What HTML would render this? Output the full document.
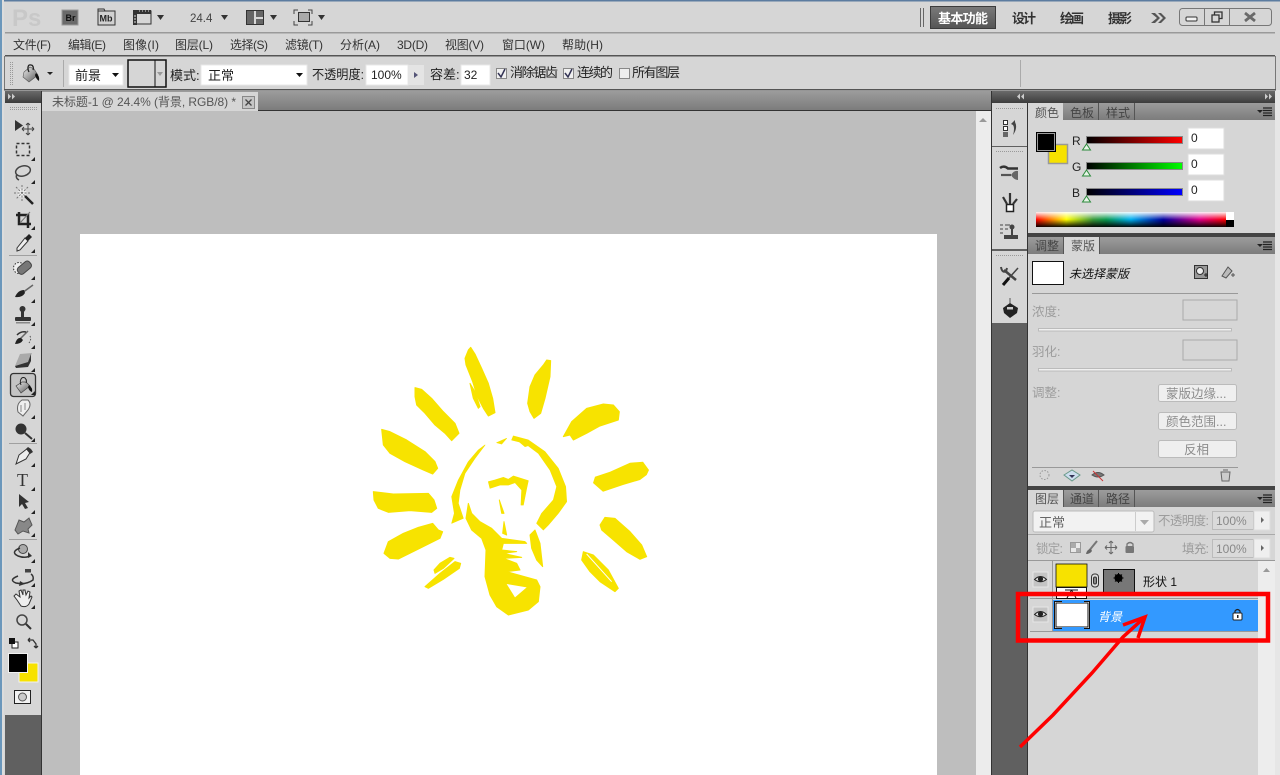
<!DOCTYPE html>
<html><head><meta charset="utf-8"><title>Photoshop</title>
<style>
html,body{margin:0;padding:0;background:#d6d6d6;overflow:hidden}
svg{display:block}
text{font-family:"Liberation Sans","Noto Sans CJK SC",sans-serif;font-size:12px;fill:#333;white-space:pre}
.o{font-size:13px;fill:#222}
.t{fill:#444;font-size:12px}
.ta{fill:#666;font-size:12px}
.w{font-weight:bold;font-size:13px;fill:#333}
.d{fill:#8c8c8c;font-size:12.5px}
.e{fill:#9c9c9c;font-size:12.5px}
</style></head><body>
<svg width="1280" height="775" viewBox="0 0 1280 775" xmlns="http://www.w3.org/2000/svg">
<defs>
<linearGradient id="hd" x1="0" y1="0" x2="0" y2="1"><stop offset="0" stop-color="#6a6a6a"/><stop offset="1" stop-color="#3c3c3c"/></linearGradient>
<linearGradient id="tb" x1="0" y1="0" x2="0" y2="1"><stop offset="0" stop-color="#9c9c9c"/><stop offset="1" stop-color="#7c7c7c"/></linearGradient>
<linearGradient id="wk" x1="0" y1="0" x2="0" y2="1"><stop offset="0" stop-color="#7a7a7a"/><stop offset="1" stop-color="#555"/></linearGradient>
<linearGradient id="sr" x1="0" y1="0" x2="1" y2="0"><stop offset="0" stop-color="#000"/><stop offset="1" stop-color="#f00"/></linearGradient>
<linearGradient id="sg" x1="0" y1="0" x2="1" y2="0"><stop offset="0" stop-color="#000"/><stop offset="1" stop-color="#0f0"/></linearGradient>
<linearGradient id="sb" x1="0" y1="0" x2="1" y2="0"><stop offset="0" stop-color="#000"/><stop offset="1" stop-color="#00f"/></linearGradient>
<linearGradient id="sp" x1="0" y1="0" x2="1" y2="0"><stop offset="0" stop-color="#f00"/><stop offset=".16" stop-color="#ff0"/><stop offset=".3" stop-color="#3a9a3a"/><stop offset=".37" stop-color="#0a9a50"/><stop offset=".5" stop-color="#00b0f0"/><stop offset=".67" stop-color="#0000a0"/><stop offset=".86" stop-color="#e0008a"/><stop offset="1" stop-color="#f00"/></linearGradient>
<linearGradient id="spv" x1="0" y1="0" x2="0" y2="1"><stop offset="0" stop-color="#fff" stop-opacity=".95"/><stop offset=".5" stop-color="#fff" stop-opacity="0"/><stop offset=".5" stop-color="#000" stop-opacity="0"/><stop offset="1" stop-color="#000" stop-opacity=".95"/></linearGradient>
<linearGradient id="bk" x1="0" y1="0" x2="1" y2="1"><stop offset="0" stop-color="#eee"/><stop offset="1" stop-color="#555"/></linearGradient>
<g id="eye"><rect x="0" y="0" width="15" height="15" fill="#c4c4c4" stroke="#e6e6e6"/><path d="M1.5 7.5Q7.5 1.5 13.5 7.5Q7.5 12 1.5 7.5Z" fill="#ddd" stroke="#222"/><circle cx="7.5" cy="7" r="2.6" fill="#222"/></g>
<path id="tri" d="M0 4H4V0Z" fill="#222"/>
<g id="menuic"><path d="M0 2H6L3 5Z" fill="#222"/><path d="M6 0H15M6 2.5H15M6 5H15M6 7.5H15" stroke="#222" stroke-width="1.2" fill="none"/></g>
</defs>

<!-- frame -->
<rect width="1280" height="775" fill="#d6d6d6"/>
<rect width="1280" height="1.5" fill="#5c7ca0"/>
<rect x="0" y="0" width="2" height="775" fill="#6b97bb"/>
<rect x="2" y="0" width="2" height="775" fill="#dcdcdc"/>
<rect x="1275" y="90" width="5" height="685" fill="#e6e6e6"/>

<!-- title bar -->
<text x="12" y="26" style="font-size:24px;font-weight:bold;fill:#c8c8c8">Ps</text>
<rect x="62" y="10" width="16" height="15" fill="#6a6a6a" stroke="#999"/><text x="65.500" y="21" style="font-size:9px;font-weight:bold;fill:#111">Br</text>
<rect x="98" y="11" width="17" height="14" fill="#d0d0d0" stroke="#333"/><path d="M98 11V9H104L105 11" fill="none" stroke="#333"/><text x="99.500" y="21.500" style="font-size:9px;font-weight:bold;fill:#222">Mb</text>
<rect x="134" y="11" width="17" height="13" fill="#d6d6d6" stroke="#333"/><rect x="133" y="10" width="18" height="4" fill="#333"/><rect x="133" y="10" width="4" height="15" fill="#333"/><path d="M134 16h2M134 19h2M134 22h2M139 11h1M142 11h1M145 11h1M148 11h1" stroke="#ddd"/>
<path d="M157 15H164L160.500 20Z" fill="#333"/>
<text x="190" y="22" style="font-size:11.500px;fill:#444">24.4</text>
<path d="M221 15H228L224.500 20Z" fill="#333"/>
<rect x="246.500" y="10.500" width="17" height="14" fill="#d8d8d8" stroke="#333"/><rect x="247" y="11" width="7" height="13" fill="#666"/><rect x="256" y="11" width="7" height="6" fill="#666"/><rect x="256" y="19" width="7" height="5" fill="#666"/>
<path d="M270 15H277L273.500 20Z" fill="#333"/>
<rect x="298.500" y="12.500" width="11" height="9" fill="#aaa" stroke="#333"/><path d="M294 14V10H298M308 10H312V14M312 21V25H308M298 25H294V21" fill="none" stroke="#444"/>
<path d="M318 15H325L321.500 20Z" fill="#333"/>
<rect x="920" y="8" width="1" height="19" fill="#666"/><rect x="923" y="8" width="1" height="19" fill="#666"/>
<rect x="930.500" y="6.500" width="65" height="22" fill="url(#wk)" stroke="#3c3c3c"/>
<text x="938" y="23" class="w" style="fill:#fff" textLength="50">基本功能</text>
<text x="1012" y="23" class="w" textLength="24">设计</text>
<text x="1060" y="23" class="w" textLength="24">绘画</text>
<text x="1108" y="23" class="w" textLength="24">摄影</text>
<path d="M1151 13L1157 18L1151 23H1155L1160 18L1155 13ZM1158 13L1163 18L1158 23H1161L1166 18L1161 13Z" fill="#555"/>
<rect x="1179.500" y="8.500" width="92" height="17" rx="3" fill="#d6d6d6" stroke="#777"/>
<path d="M1204.500 9V25M1229.500 9V25" stroke="#777"/>
<rect x="1186" y="17" width="11" height="4" rx="1" fill="#f2f2f2" stroke="#333"/>
<rect x="1212" y="15" width="7" height="7" fill="none" stroke="#333" stroke-width="1.300"/><path d="M1214.500 15V12H1222V18.500H1219" fill="none" stroke="#333" stroke-width="1.300"/>
<path d="M1245 13L1255 21M1255 13L1245 21" stroke="#6a6a6a" stroke-width="2.800"/>
<rect x="5" y="32" width="1270" height="1.500" fill="#9a9a9a"/>

<!-- menu -->
<text x="13" y="49" textLength="38">文件(F)</text>
<text x="68" y="49" textLength="38">编辑(E)</text>
<text x="123" y="49" textLength="36">图像(I)</text>
<text x="175" y="49" textLength="38">图层(L)</text>
<text x="230" y="49" textLength="38">选择(S)</text>
<text x="285" y="49" textLength="38">滤镜(T)</text>
<text x="340" y="49" textLength="40">分析(A)</text>
<text x="397" y="49" textLength="31">3D(D)</text>
<text x="445" y="49" textLength="39">视图(V)</text>
<text x="502" y="49" textLength="43">窗口(W)</text>
<text x="562" y="49" textLength="41">帮助(H)</text>
<rect x="5" y="55" width="1270" height="1.500" fill="#555"/>

<!-- options bar -->
<rect x="4" y="56" width="1" height="34" fill="#777"/>
<rect x="1275" y="56" width="1" height="34" fill="#777"/>
<path d="M10.500 62V85" stroke="#999" stroke-dasharray="1 1" stroke-width="1"/><path d="M12.500 62V85" stroke="#999" stroke-dasharray="1 1" stroke-width="1"/>
<path d="M30 67L24 72L23 77L29 82L38 75L34 69Z" fill="url(#bk)" stroke="#555" stroke-width=".6"/><path d="M29 72C27 68 28 64 31 65C33 65 34 68 33 70" fill="none" stroke="#222" stroke-width="1.300"/><path d="M36 73Q40 76 39 81Q36 79 35 75Z" fill="#111"/>
<path d="M47 72H53L50 75Z" fill="#222"/>
<rect x="63" y="60" width="1" height="27" fill="#aaa"/>
<rect x="69" y="65" width="54" height="20" fill="#fff" stroke="#e8e8e8"/>
<text x="75" y="80" class="o">前景</text>
<path d="M112 73H119L115.500 77Z" fill="#111"/>
<rect x="128" y="60" width="38" height="27" fill="#d6d6d6" stroke="#111" stroke-width="1.500"/>
<rect x="154.500" y="60" width="1" height="27" fill="#111"/>
<path d="M157 72H163L160 76Z" fill="#999"/>
<text x="170" y="80" class="o">模式:</text>
<rect x="201" y="65" width="106" height="20" fill="#fff" stroke="#e8e8e8"/>
<text x="208" y="80" class="o">正常</text>
<path d="M296 73H303L299.500 77Z" fill="#111"/>
<text x="312" y="79" class="o" textLength="52" lengthAdjust="spacingAndGlyphs">不透明度:</text>
<rect x="366" y="65" width="42" height="20" fill="#fff" stroke="#e8e8e8"/>
<text x="371" y="79" style="font-size:12px;fill:#222">100%</text>
<rect x="408" y="65" width="16" height="20" fill="#e4e4e4"/><path d="M414 72L418 75L414 78Z" fill="#557"/>
<text x="430" y="79" class="o">容差:</text>
<rect x="461" y="65" width="29" height="20" fill="#fff" stroke="#e8e8e8"/>
<text x="464" y="79" style="font-size:12px;fill:#222">32</text>
<rect x="496.500" y="68.500" width="10" height="10" fill="#f0f0f0" stroke="#888"/><path d="M498 73L501 77L505 69" fill="none" stroke="#335" stroke-width="1.500"/>
<text x="510" y="77" class="o" textLength="48">消除锯齿</text>
<rect x="563.500" y="68.500" width="10" height="10" fill="#f0f0f0" stroke="#888"/><path d="M565 73L568 77L572 69" fill="none" stroke="#335" stroke-width="1.500"/>
<text x="577" y="77" class="o" textLength="36">连续的</text>
<rect x="619.500" y="68.500" width="10" height="10" fill="#eee" stroke="#888"/>
<text x="632" y="77" class="o" textLength="48">所有图层</text>
<rect x="1020" y="60" width="1" height="27" fill="#aaa"/>
<rect x="4" y="89" width="1272" height="1.500" fill="#555"/>

<!-- doc area -->
<rect x="42" y="91" width="950" height="19" fill="url(#tb)"/>
<rect x="42" y="110" width="950" height="1" fill="#333"/>
<rect x="42" y="111" width="934" height="664" fill="#bebebe"/>
<rect x="976" y="111" width="15" height="664" fill="#ececec"/>
<path d="M979 122H987L983 118Z" fill="#999"/>
<rect x="80" y="234" width="857" height="541" fill="#fff"/>
<rect x="42" y="92" width="216" height="19" fill="#d6d6d6"/>
<text x="52" y="106" style="fill:#555;font-size:12px" textLength="184">未标题-1 @ 24.4% (背景, RGB/8) *</text>
<rect x="242.500" y="96.500" width="12" height="12" fill="#c6c6c6" stroke="#888"/><path d="M245.500 99.500L251.500 105.500M251.500 99.500L245.500 105.500" stroke="#444" stroke-width="1.300"/>

<!-- tools panel -->
<rect x="5" y="91" width="36" height="12" fill="url(#hd)"/>
<path d="M8 93.500L11 96.500L8 99.500ZM12 93.500L15 96.500L12 99.500Z" fill="#ccc"/>
<rect x="5" y="103" width="36" height="612" fill="#d6d6d6"/>
<rect x="5" y="715" width="36" height="60" fill="#606060"/>
<rect x="41" y="91" width="1" height="684" fill="#333"/>
<path d="M10 107.500H37" stroke="#999" stroke-dasharray="1 1" stroke-width="1"/><path d="M10 109.500H37" stroke="#999" stroke-dasharray="1 1" stroke-width="1"/>

<!-- move -->
<path d="M15 120L15 131L23 125.500Z" fill="#333"/><path d="M28 123V135M22 129H34M28 123l-2 2M28 123l2 2M28 135l-2-2M28 135l2-2M22 129l2-2M22 129l2 2M34 129l-2-2M34 129l-2 2" stroke="#444" fill="none"/>
<!-- marquee -->
<rect x="16.500" y="143.500" width="13" height="12" fill="none" stroke="#333" stroke-width="1.500" stroke-dasharray="3 2"/>
<use href="#tri" x="31" y="157"/>
<!-- lasso -->
<ellipse cx="23" cy="171" rx="7.500" ry="5" transform="rotate(-15 23 171)" fill="none" stroke="#444" stroke-width="1.500"/><path d="M17 174Q15 178 19 180" fill="none" stroke="#444" stroke-width="1.500"/>
<use href="#tri" x="31" y="180"/>
<!-- wand -->
<circle cx="22" cy="193" r="4.500" fill="#eee"/><path d="M22 185V201M14 193H30M16 187L28 199M28 187L16 199" stroke="#777" stroke-dasharray="2 1.500"/><path d="M25 196L33 204" stroke="#222" stroke-width="2.500"/>
<!-- crop -->
<path d="M19 212V224H31M16 215H28V228" fill="none" stroke="#222" stroke-width="2.500"/><path d="M20 223L30 212" stroke="#777"/>
<use href="#tri" x="31" y="226"/>
<!-- eyedropper -->
<path d="M17 248L25 238L28 241L20 250L17 251Z" fill="#eee" stroke="#333"/><path d="M25 238L29 234L32 237L28 241Z" fill="#222"/>
<use href="#tri" x="31" y="249"/>
<rect x="9" y="255" width="28" height="1" fill="#a0a0a0"/>
<!-- heal -->
<circle cx="19" cy="268" r="5.500" fill="#eee" stroke="#333" stroke-dasharray="1.500 1.500"/><rect x="17" y="264" width="15" height="8" rx="3" transform="rotate(-40 24 268)" fill="#777" stroke="#444"/>
<use href="#tri" x="31" y="276"/>
<!-- brush -->
<path d="M33 285L22 293" stroke="#666" stroke-width="1.500"/><path d="M15 297Q18 290 24 290L25 293Q22 298 15 297Z" fill="#222"/>
<use href="#tri" x="31" y="299"/>
<!-- stamp -->
<circle cx="22.500" cy="309" r="3" fill="#333"/><rect x="21" y="311" width="3" height="6" fill="#333"/><rect x="15" y="317" width="16" height="4" rx="1" fill="#333"/><rect x="16" y="322" width="14" height="1.500" fill="#888"/>
<use href="#tri" x="31" y="322"/>
<!-- history brush -->
<path d="M28 331L20 339" stroke="#666" stroke-width="1.500"/><path d="M15 344Q17 337 21 338L23 340Q21 344 15 344Z" fill="#222"/><path d="M17 335Q21 331 26 332" fill="none" stroke="#333" stroke-width="1.500"/><path d="M30 336Q32 340 28 344" fill="none" stroke="#555" stroke-dasharray="1.500 1.500"/>
<use href="#tri" x="31" y="345"/>
<!-- eraser -->
<path d="M20 354L32 353L28 362L15 366Z" fill="#aaa"/><path d="M15 366L28 362L31 354L31 361L28 367L16 368Z" fill="#333"/>
<use href="#tri" x="31" y="368"/>
<!-- bucket selected -->
<rect x="10.500" y="373.500" width="25" height="23" rx="3" fill="#c4c4c4" stroke="#333" stroke-width="1.300"/>
<path d="M22 382L16 386L21 393L30 386L26 382Z" fill="url(#bk)" stroke="#444" stroke-width=".7"/><path d="M21 385C19 380 22 376 25 378C26 379 27 381 26 383" fill="none" stroke="#222"/><path d="M29 385Q33 388 32 392Q29 391 28 387Z" fill="#111"/>
<use href="#tri" x="31" y="391"/>
<!-- smudge -->
<path d="M18 412Q16 404 22 400L28 400Q32 404 28 410L23 416Z" fill="#eee" stroke="#666"/><path d="M21 405V412M25 403V410" stroke="#888"/>
<use href="#tri" x="31" y="415"/>
<!-- sponge / burn -->
<circle cx="21" cy="429" r="5.500" fill="#333"/><path d="M25 433L32 439" stroke="#333" stroke-width="2"/>
<use href="#tri" x="31" y="438"/>
<rect x="9" y="443" width="28" height="1" fill="#a0a0a0"/>
<!-- pen -->
<path d="M16 464L19 455L28 448L31 451L26 459L16 464Z" fill="#eee" stroke="#333"/><path d="M28 447L31 449L33 452L30 454L26 449Z" fill="#333"/>
<use href="#tri" x="31" y="463"/>
<!-- type -->
<text x="17" y="486" style="font-family:'Liberation Serif',serif;font-size:18px;fill:#333">T</text>
<use href="#tri" x="31" y="487"/>
<!-- path selection -->
<path d="M19 494L19 507L22 504L25 509L28 508L25 503L29 502Z" fill="#333"/>
<use href="#tri" x="31" y="510"/>
<!-- custom shape -->
<path d="M15 530L19 520L24 522L29 518L32 525L28 529L29 533L23 531L18 534Z" fill="#888" stroke="#555"/>
<use href="#tri" x="31" y="533"/>
<rect x="9" y="539" width="28" height="1" fill="#a0a0a0"/>
<!-- 3D rot -->
<circle cx="23" cy="549" r="4.500" fill="#aaa" stroke="#444"/><path d="M20 548Q10 552 18 556Q26 559 31 555" fill="none" stroke="#333" stroke-width="1.500"/><path d="M28 552L32 556L28 558" fill="#333"/>
<use href="#tri" x="31" y="559"/>
<!-- 3D cam -->
<path d="M18 576Q8 580 16 583Q26 585 33 580Q34 576 31 574" fill="none" stroke="#333" stroke-width="1.500"/><path d="M20 581L25 584L19 586Z" fill="#333"/><rect x="25" y="569" width="6" height="3.500" fill="#444"/>
<use href="#tri" x="31" y="583"/>
<!-- hand -->
<path d="M17 600L14 596L16 594L20 597L19 591L21 590L23 595V590L25 590L26 595L28 591L30 592L29 598L31 596L32 597L29 604Q26 608 21 606Z" fill="#eee" stroke="#333"/>
<use href="#tri" x="31" y="605"/>
<!-- zoom -->
<circle cx="22" cy="620" r="5" fill="#d6d6d6" stroke="#444" stroke-width="1.500"/><path d="M26 624L31 629" stroke="#333" stroke-width="2"/>
<!-- small colors -->
<rect x="12" y="642" width="6" height="6" fill="#fff" stroke="#222"/><rect x="9" y="638" width="6" height="6" fill="#111"/>
<path d="M28 640H33L36 644V648M28 640l2-2M28 640l2 2M36 648l-2-2M36 648l2-2" fill="none" stroke="#333" stroke-width="1.300"/>
<!-- fg/bg -->
<rect x="19" y="663" width="19" height="19" fill="#f7e200" stroke="#f2f2f2"/>
<rect x="8.500" y="653.500" width="19" height="19" fill="#000" stroke="#f2f2f2"/>
<rect x="14.500" y="690.500" width="16" height="13" fill="#f2f2f2" stroke="#222"/><circle cx="22.500" cy="697" r="4" fill="#ccc" stroke="#555"/>

<!-- dock -->
<rect x="992" y="91" width="283" height="12" fill="url(#hd)"/>
<path d="M1020 93.500L1017 96.500L1020 99.500ZM1024 93.500L1021 96.500L1024 99.500ZM1265 93.500L1268 96.500L1265 99.500ZM1269 93.500L1272 96.500L1269 99.500Z" fill="#ccc"/>
<rect x="992" y="103" width="36" height="672" fill="#606060"/>
<rect x="991" y="91" width="1" height="684" fill="#333"/>
<rect x="992" y="103" width="35" height="43" fill="#d6d6d6"/>
<rect x="992" y="147" width="35" height="102" fill="#d6d6d6"/>
<rect x="992" y="251" width="35" height="72" fill="#d6d6d6"/>
<path d="M996 108.500H1023M996 151.500H1023M996 255.500H1023" stroke="#999" stroke-dasharray="1 1"/>
<!-- history -->
<rect x="1003.500" y="120.500" width="4" height="4" fill="#fff" stroke="#333"/><rect x="1003.500" y="126.500" width="4" height="4" fill="#fff" stroke="#333"/><rect x="1003" y="132" width="5" height="5" fill="#666"/>
<path d="M1011 124L1015 120V122Q1018 128 1013 135Q1015 128 1013 125Z" fill="#444"/>
<!-- brush presets -->
<path d="M1000 168Q1004 165 1008 168.500L1018 168.500" stroke="#333" stroke-width="2.500" fill="none"/><path d="M1001 175H1011" stroke="#555" stroke-width="2.200"/><path d="M1011 175Q1014 170 1018 171V180Q1014 180 1011 175Z" fill="#666"/>
<!-- brushes cup -->
<rect x="1006.500" y="204.500" width="7" height="7" fill="#fff" stroke="#222" stroke-width="1.500"/><path d="M1007 204L1003 197M1010 204V193M1013 204L1017 199" stroke="#333" stroke-width="2.200"/>
<!-- clone -->
<path d="M1000 225H1003M1000 229H1003M1000 233H1003M1005 225H1010M1005 229H1008" stroke="#444"/><circle cx="1012" cy="227" r="2.500" fill="#444"/><rect x="1011" y="229" width="2" height="6" fill="#444"/><rect x="1004" y="235" width="14" height="4" fill="#444"/>
<!-- tools -->
<path d="M1004 270L1016 280" stroke="#444" stroke-width="2.500"/><path d="M1001 267Q1002 273 1006 271.500L1007 268" fill="none" stroke="#444" stroke-width="2"/><path d="M1018 268L1009 278" stroke="#444" stroke-width="1.500"/><path d="M1009 278L1003 285" stroke="#111" stroke-width="3"/>
<!-- 3d -->
<path d="M1010 298V304" stroke="#555"/><path d="M1003 308L1010 303L1018 308L1017 313L1010 318L1004 313Z" fill="#222"/><path d="M1007 307H1013V309.500H1007Z" fill="#ccc"/>

<!-- color panel -->
<rect x="1027" y="103" width="1" height="672" fill="#333"/>
<rect x="1028" y="103" width="247" height="17" fill="url(#tb)"/>
<rect x="1028" y="103" width="35" height="17" fill="#d6d6d6"/>
<path d="M1098.500 103V120M1134.500 103V120" stroke="#555"/>
<text x="1035" y="117" class="ta" style="fill:#555">颜色</text>
<text x="1070" y="117" class="t">色板</text>
<text x="1106" y="117" class="t">样式</text>
<use href="#menuic" x="1257" y="108"/>
<rect x="1048.500" y="144.500" width="19" height="19" fill="#f7e200" stroke="#999" stroke-width="1.500"/>
<rect x="1036.500" y="132.500" width="19" height="19" fill="#000" stroke="#000"/><rect x="1037.500" y="133.500" width="17" height="17" fill="#000" stroke="#ddd" stroke-width=".7"/>
<text x="1072" y="145" style="font-size:12px;fill:#222">R</text>
<text x="1072" y="171" style="font-size:12px;fill:#222">G</text>
<text x="1072" y="197" style="font-size:12px;fill:#222">B</text>
<rect x="1086.500" y="136.500" width="96" height="7" fill="url(#sr)" stroke="#888"/>
<rect x="1086.500" y="162.500" width="96" height="7" fill="url(#sg)" stroke="#888"/>
<rect x="1086.500" y="188.500" width="96" height="7" fill="url(#sb)" stroke="#888"/>
<path d="M1082.500 150L1086.500 144L1090.500 150Z" fill="#e6f4e6" stroke="#2a8a3a"/>
<path d="M1082.500 176L1086.500 170L1090.500 176Z" fill="#e6f4e6" stroke="#2a8a3a"/>
<path d="M1082.500 202L1086.500 196L1090.500 202Z" fill="#e6f4e6" stroke="#2a8a3a"/>
<rect x="1188" y="128" width="36" height="21" fill="#fff" stroke="#ddd"/><text x="1191" y="142" style="fill:#222;font-size:12px">0</text>
<rect x="1188" y="154" width="36" height="21" fill="#fff" stroke="#ddd"/><text x="1191" y="168" style="fill:#222;font-size:12px">0</text>
<rect x="1188" y="180" width="36" height="21" fill="#fff" stroke="#ddd"/><text x="1191" y="194" style="fill:#222;font-size:12px">0</text>
<rect x="1036" y="212" width="190" height="15" fill="url(#sp)"/>
<rect x="1036" y="212" width="190" height="15" fill="url(#spv)"/>
<rect x="1226" y="212" width="8" height="8" fill="#fff"/><rect x="1226" y="220" width="8" height="7" fill="#000"/>
<rect x="1028" y="233" width="247" height="4" fill="#444"/>

<!-- masks panel -->
<rect x="1028" y="237" width="247" height="17" fill="url(#tb)"/>
<rect x="1064" y="237" width="35" height="17" fill="#d6d6d6"/>
<path d="M1063.500 237V254M1099.500 237V254" stroke="#555"/>
<text x="1035" y="250" class="t">调整</text>
<text x="1071" y="250" class="ta" style="fill:#555">蒙版</text>
<use href="#menuic" x="1257" y="242"/>
<rect x="1032.500" y="261.500" width="31" height="23" fill="#fff" stroke="#111"/>
<text x="1069" y="278" style="font-style:italic;fill:#111;font-size:12px">未选择蒙版</text>
<rect x="1194.500" y="265.500" width="13" height="13" fill="#999" stroke="#333"/><circle cx="1200" cy="271" r="3.500" fill="#eee" stroke="#333"/><path d="M1204 275H1208M1206 273V277" stroke="#222"/>
<path d="M1222 276L1228 267L1232 271L1226 278ZM1231 275H1235M1233 273V277" fill="#bbb" stroke="#555"/>
<rect x="1032" y="293" width="206" height="1" fill="#999"/>
<text x="1032" y="316" class="e">浓度:</text>
<rect x="1183" y="300" width="54" height="20" fill="#d6d6d6" stroke="#aaa"/>
<rect x="1038.500" y="328.500" width="193" height="2.500" fill="#f0f0f0" stroke="#bbb"/>
<text x="1032" y="356" class="e">羽化:</text>
<rect x="1183" y="340" width="54" height="20" fill="#d6d6d6" stroke="#aaa"/>
<rect x="1038.500" y="368.500" width="193" height="2.500" fill="#f0f0f0" stroke="#bbb"/>
<text x="1032" y="397" class="e">调整:</text>
<rect x="1158.500" y="384.500" width="78" height="17" rx="2" fill="#efefef" stroke="#bbb"/><text x="1166" y="398" class="d">蒙版边缘...</text>
<rect x="1158.500" y="412.500" width="78" height="17" rx="2" fill="#efefef" stroke="#bbb"/><text x="1166" y="426" class="d">颜色范围...</text>
<rect x="1158.500" y="440.500" width="78" height="17" rx="2" fill="#efefef" stroke="#bbb"/><text x="1184" y="454" class="d">反相</text>
<rect x="1032" y="467" width="206" height="1" fill="#999"/>
<circle cx="1044.500" cy="475" r="4.500" fill="none" stroke="#999" stroke-dasharray="1.500 1.500"/>
<path d="M1064 475L1072 470L1080 475L1072 481Z" fill="#cde" stroke="#6a9a8a"/><path d="M1069 475H1075L1072 478Z" fill="#335"/>
<path d="M1092 475Q1098 470 1104 475Q1098 479 1092 475Z" fill="#777" stroke="#555"/><path d="M1093 471L1103 481" stroke="#c33"/>
<path d="M1221 472H1230L1229 481H1222ZM1223 470H1228" fill="#ccc" stroke="#666"/>
<rect x="1028" y="486" width="247" height="4" fill="#444"/>

<!-- layers panel -->
<rect x="1028" y="490" width="247" height="17" fill="url(#tb)"/>
<rect x="1028" y="490" width="35" height="17" fill="#d6d6d6"/>
<path d="M1063.500 490V507M1098.500 490V507M1134.500 490V507" stroke="#555"/>
<text x="1035" y="503" class="ta" style="fill:#555">图层</text>
<text x="1070" y="503" class="t">通道</text>
<text x="1106" y="503" class="t">路径</text>
<use href="#menuic" x="1257" y="495"/>
<rect x="1033" y="511" width="121" height="21" rx="2" fill="#f2f2f2" stroke="#bbb"/>
<rect x="1135" y="512" width="1" height="19" fill="#ccc"/>
<text x="1039" y="527" style="fill:#666;font-size:13px">正常</text>
<path d="M1140 520H1149L1144.500 525Z" fill="#aaa"/>
<text x="1158" y="525" class="e" textLength="51">不透明度:</text>
<rect x="1212.500" y="511.500" width="41" height="18" fill="#dadada" stroke="#bbb"/><text x="1216" y="525" style="fill:#888;font-size:12px">100%</text>
<rect x="1254" y="511" width="16" height="19" fill="#efefef" stroke="#ddd"/><path d="M1261 517L1264 520L1261 523Z" fill="#666"/>
<rect x="1028" y="534" width="247" height="1" fill="#aaa"/>
<text x="1036" y="553" class="e" textLength="27">锁定:</text>
<rect x="1070.500" y="542.500" width="10" height="10" fill="#e8e8e8" stroke="#999"/><rect x="1071" y="543" width="5" height="5" fill="#aaa"/><rect x="1076" y="548" width="4" height="4" fill="#aaa"/>
<path d="M1088 552L1097 541" stroke="#777" stroke-width="2"/><path d="M1086 554Q1087 549 1091 549L1092 551Q1090 554 1086 554Z" fill="#666"/>
<path d="M1111 542V553M1105.500 547.500H1116.500M1111 541l-2 2M1111 541l2 2M1111 554l-2-2M1111 554l2-2M1105 547.500l2-2M1105 547.500l2 2M1117 547.500l-2-2M1117 547.500l-2 2" stroke="#666" fill="none"/>
<rect x="1125.500" y="546" width="8.500" height="7" rx="1" fill="#777"/><path d="M1127 546V544Q1130 541 1133 544V546" fill="none" stroke="#777" stroke-width="1.300"/>
<text x="1182" y="553" class="e" textLength="27">填充:</text>
<rect x="1212.500" y="539.500" width="41" height="18" fill="#dadada" stroke="#bbb"/><text x="1216" y="553" style="fill:#888;font-size:12px">100%</text>
<rect x="1254" y="539" width="16" height="19" fill="#efefef" stroke="#ddd"/><path d="M1261 545L1264 548L1261 551Z" fill="#666"/>
<rect x="1028" y="560" width="247" height="1" fill="#999"/>
<!-- layers -->
<rect x="1258" y="561" width="17" height="214" fill="#ededed"/>
<path d="M1263 572H1270L1266.500 568Z" fill="#999"/>
<path d="M1030 598.500H1258M1052.500 561V632M1030 631.500H1258" stroke="#999"/>
<use href="#eye" x="1033" y="572"/>
<rect x="1056" y="564" width="31" height="23" fill="#f7e200" stroke="#111" stroke-width=".8"/>
<rect x="1056.500" y="587.500" width="30" height="11" fill="#fff" stroke="#111"/><path d="M1065 590H1078M1071.500 590L1067 598M1071.500 590L1076 598" stroke="#111"/>
<rect x="1091.500" y="574" width="7" height="13" rx="3" fill="#ddd" stroke="#333"/><rect x="1093.500" y="577" width="3" height="7" rx="1.500" fill="#888" stroke="#333"/>
<rect x="1103.500" y="569.500" width="31" height="23" fill="#777" stroke="#111"/>
<circle cx="1118.500" cy="578" r="4" fill="#000"/><path d="M1113.500 578H1123.500M1118.500 573V583M1115 574.500L1122 581.500M1122 574.500L1115 581.500" stroke="#000"/>
<text x="1143" y="586" style="fill:#111;font-size:12px">形状 1</text>
<rect x="1053" y="600" width="205" height="31" fill="#3399ff"/>
<use href="#eye" x="1033" y="607"/>
<rect x="1054.500" y="601.500" width="35" height="27" fill="#fff" stroke="#111"/>
<rect x="1056" y="603" width="32" height="24" fill="#fff" stroke="#111"/>
<path d="M1062 601.500H1084M1062 628.500H1084" stroke="#3399ff" stroke-width="3"/>
<rect x="1057" y="604" width="30" height="22" fill="#fff"/>
<text x="1098" y="621" style="font-style:italic;fill:#fff;font-size:12px">背景</text>
<rect x="1233" y="613" width="9" height="7" rx="1" fill="#fff" stroke="#222"/><path d="M1235 613V611Q1237.500 608 1240 611V613" fill="none" stroke="#222" stroke-width="1.200"/><rect x="1237" y="615" width="1.500" height="3" fill="#222"/>

<!-- artwork -->
<g fill="#f7e300">
<g transform="translate(360,340) scale(.33333)" stroke="#f7e300" stroke-width="3" stroke-linejoin="round">
<path d="M325 30L332 22L345 42L365 85L385 130L398 175L405 218L385 228L370 205L352 170L338 125L318 75L315 55Z"/>
<path d="M330 130L345 155L360 200L355 205L340 175Z"/>
<path d="M165 143L185 148L215 175L250 215L285 250L297 280L275 302L255 280L225 255L195 220L170 195L165 170Z"/>
<path d="M65 268L90 275L140 300L195 335L225 365L233 385L218 402L190 390L135 365L90 340L70 315Z"/>
</g>
<g transform="translate(510,340) scale(.33333)" stroke="#f7e300" stroke-width="3" stroke-linejoin="round">
<path d="M100 75L110 60L122 62L120 110L105 175L92 220L72 235L60 215L53 190L60 140L75 105Z"/>
<path d="M160 290L185 245L230 205L280 192L310 195L328 215L325 240L270 258L230 280L190 300L180 285Z"/>
</g>
<path d="M595 476.700L610 471.700L630 462.700L643 461.700L649 470L646.700 475L640 480L623 485L603 491.700L593 483Z"/>
<g transform="translate(360,480) scale(.33333)" stroke="#f7e300" stroke-width="3" stroke-linejoin="round">
<path d="M40 35L100 42L205 40L222 60L230 85L215 97L150 92L85 97L55 85L42 60Z"/>
<path d="M218 130L235 150L248 155L240 175L180 205L115 237L90 235L72 220L85 185L130 160L175 142Z"/>
<path d="M270 232L282 235L250 265L225 280L222 270L240 250Z"/>
<path d="M285 245L302 250L298 265L250 298L205 325L195 320L240 280Z"/>
<path d="M735 112L765 115L810 155L845 195L860 230L840 238L800 215L760 180L725 150L720 135Z"/>
<path d="M670 215L700 225L745 270L775 325L765 335L720 305L690 275L665 240Z"/>
<path d="M325 70L335 100L360 125L395 145L425 175L495 185L500 190L430 190L425 210L470 215L430 220L485 232L430 235L470 250L480 270L440 275L530 300L540 320L535 365L505 390L445 405L410 380L390 345L375 290L378 210L365 175L335 150L318 115Z"/>
<path d="M440 312L500 322L465 352Z" fill="#fff" stroke="none"/>
<path d="M510 165L525 150L540 190L548 260L530 240L515 205Z"/>
<path d="M418 60L432 100L425 100Z"/>
<path d="M432 125L440 165L428 160Z"/>
<path d="M680 222L755 305" fill="none" stroke="#fff" stroke-width="3"/>
</g>
<g transform="translate(445,430) scale(.33333)" stroke="#f7e300" stroke-width="2" stroke-linejoin="round">
<path d="M120 45L90 85L60 130L45 180L40 220L55 265L20 280L28 250L20 200L40 150L70 95L100 60Z"/>
<path d="M205 18L250 30L300 65L340 115L362 170L365 215L340 250L310 285L295 300L275 280L290 250L325 210L335 170L315 120L280 70L240 40L200 30Z"/>
<path d="M220 33L255 45L240 50Z"/>
<path d="M155 38L185 25L170 42Z"/>
<path d="M130 155L150 150L175 142L190 148L205 138L250 152L245 175L235 225L228 225L230 180L210 158L190 165L165 165L135 175Z"/>
</g>
</g>

<!-- red annotation -->
<rect x="1018" y="594" width="250" height="46.500" fill="none" stroke="#fe0000" stroke-width="4.500"/>
<path d="M1020 747L1053 715L1092 673L1123 637L1145 617" fill="none" stroke="#fe0000" stroke-width="3.500"/>
<path d="M1123 625L1145 617L1138 638" fill="none" stroke="#fe0000" stroke-width="3.500"/>
</svg>
</body></html>
